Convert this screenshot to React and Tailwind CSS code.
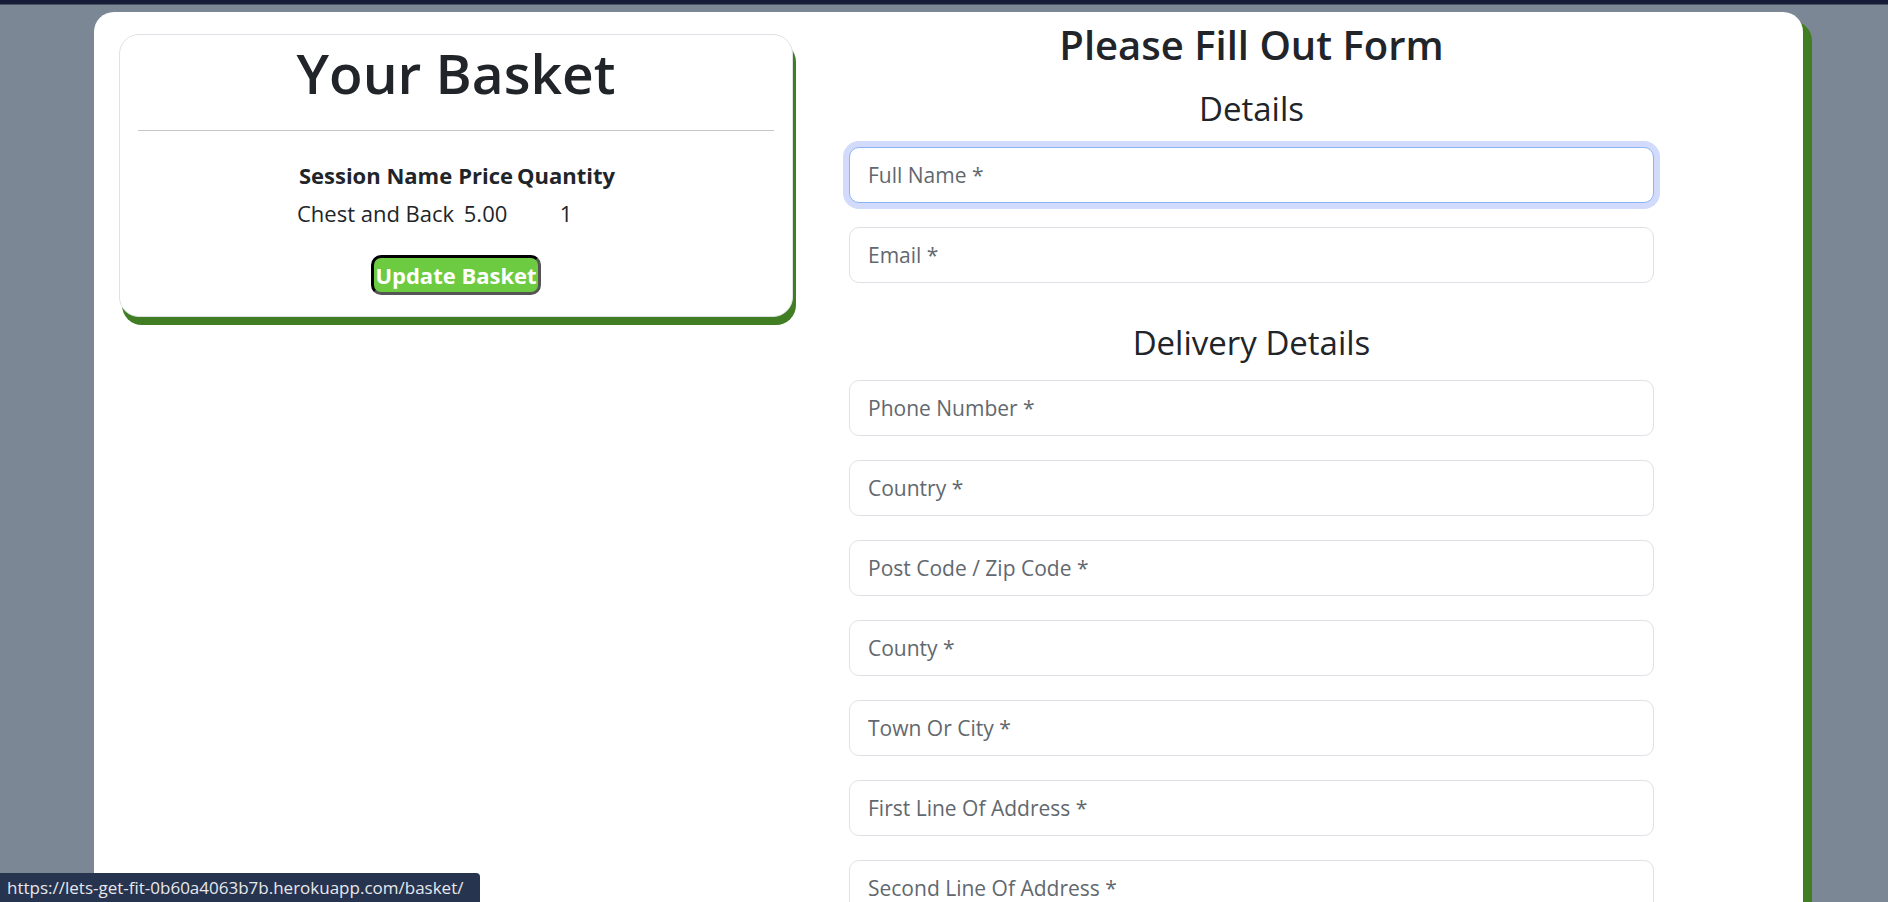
import React from 'react'

const deliveryFields = [
  'Phone Number *',
  'Country *',
  'Post Code / Zip Code *',
  'County *',
  'Town Or City *',
  'First Line Of Address *',
  'Second Line Of Address *',
  'Third Line Of Address',
]

function Field({ placeholder, focused }) {
  return (
    <input
      type="text"
      placeholder={placeholder}
      className={`block w-full h-[56px] mb-[24px] px-[18px] rounded-[10px] border bg-white text-[21px] text-[#212529] placeholder:text-[#62686e] outline-none ${
        focused ? 'border-[#8db3f7] ring-[6px] ring-[#d2dbfb]' : 'border-[#dee2e6]'
      }`}
    />
  )
}

function Basket() {
  return (
    <div className="mt-[22px] w-[674px] self-start rounded-[20px] border border-[#dee2e6] bg-white px-[18px] pb-[21px] shadow-[3px_8px_0_#417d22]">
      <h2 className="mt-[9px] text-center text-[55px] leading-[57px] font-semibold text-[#212529]">Your Basket</h2>
      <hr className="mt-[29px] border-0 border-t border-[#c6c7c8]" />
      <table className="mx-auto mt-[25px] text-[22px] leading-[38px] text-[#212529] text-center">
        <thead>
          <tr className="font-bold">
            <th className="px-[2px]">Session Name</th>
            <th className="px-[2px]">Price</th>
            <th className="px-[2px]">Quantity</th>
          </tr>
        </thead>
        <tbody>
          <tr>
            <td className="px-[2px]">Chest and Back</td>
            <td className="px-[2px]">5.00</td>
            <td className="px-[2px]">1</td>
          </tr>
        </tbody>
      </table>
      <div className="mt-[23px] flex justify-center">
        <button className="rounded-[10px] border-[3px] border-t-black border-l-black border-r-[#555] border-b-[#555] bg-[#6ccb40] px-[1px] text-[22px] leading-[34px] font-bold text-white">
          Update Basket
        </button>
      </div>
    </div>
  )
}

export default function App() {
  return (
    <div className="relative h-screen overflow-hidden bg-[#7b8794] font-['Open_Sans',sans-serif]">
      <div className="h-[4px] bg-[#161b38]" />
      <div className="h-[1px] bg-[#4a5264]" />
      <div className="ml-[94px] mt-[7px] flex w-[1709px] min-h-[900px] rounded-t-[20px] bg-white pl-[25px] shadow-[9px_9px_0_#417d22]">
        <Basket />
        <div className="ml-[56px] w-[805px] text-center text-[#212529]">
          <h1 className="mt-[8px] text-[40px] leading-[49px] font-semibold">Please Fill Out Form</h1>
          <h3 className="mt-[20px] text-[33px] leading-[40px]">Details</h3>
          <div className="mt-[18px]">
            <Field placeholder="Full Name *" focused />
            <Field placeholder="Email *" />
          </div>
          <h3 className="mt-[40px] text-[33px] leading-[40px]">Delivery Details</h3>
          <div className="mt-[17px]">
            {deliveryFields.map(f => (
              <Field key={f} placeholder={f} />
            ))}
          </div>
        </div>
      </div>
      <div className="fixed bottom-0 left-0 h-[29px] w-[480px] rounded-tr-[4px] bg-[#27344f] pl-[7px] text-[17px] leading-[29px] text-[#e6e8ec]">
        https://lets-get-fit-0b60a4063b7b.herokuapp.com/basket/
      </div>
    </div>
  )
}
